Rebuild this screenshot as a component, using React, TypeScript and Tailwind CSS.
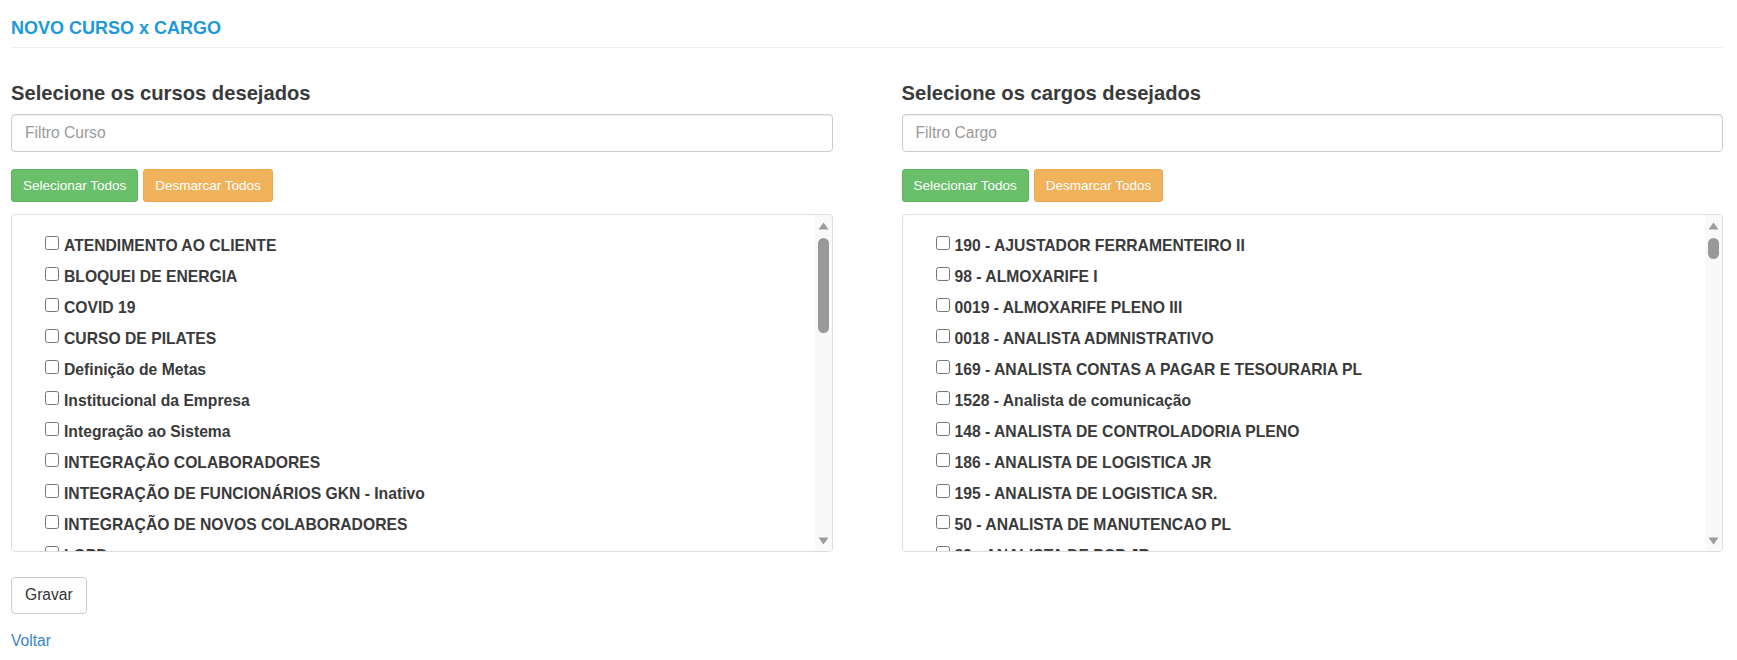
import React from 'react';

const cursos = [
  'ATENDIMENTO AO CLIENTE',
  'BLOQUEI DE ENERGIA',
  'COVID 19',
  'CURSO DE PILATES',
  'Definição de Metas',
  'Institucional da Empresa',
  'Integração ao Sistema',
  'INTEGRAÇÃO COLABORADORES',
  'INTEGRAÇÃO DE FUNCIONÁRIOS GKN - Inativo',
  'INTEGRAÇÃO DE NOVOS COLABORADORES',
  'LGPD',
  'NR 10',
  'NR 35',
];

const cargos = [
  '190 - AJUSTADOR FERRAMENTEIRO II',
  '98 - ALMOXARIFE I',
  '0019 - ALMOXARIFE PLENO III',
  '0018 - ANALISTA ADMNISTRATIVO',
  '169 - ANALISTA CONTAS A PAGAR E TESOURARIA PL',
  '1528 - Analista de comunicação',
  '148 - ANALISTA DE CONTROLADORIA PLENO',
  '186 - ANALISTA DE LOGISTICA JR',
  '195 - ANALISTA DE LOGISTICA SR.',
  '50 - ANALISTA DE MANUTENCAO PL',
  '89 - ANALISTA DE PCP JR',
  '77 - ANALISTA DE RH',
];

const Scrollbar: React.FC<{ thumb: number }> = ({ thumb }) => (
  <div className="w-[17px] shrink-0 bg-[#f9f9f9] flex flex-col items-center pt-[7px] pb-[6px]">
    <svg width="11" height="8" viewBox="0 0 11 8" className="shrink-0">
      <path d="M5.5 0.5 L10.5 7.5 L0.5 7.5 Z" fill="#9b9b9b" />
    </svg>
    <div className="w-[11px] rounded-full bg-[#999] mt-[8px] shrink-0" style={{ height: thumb }} />
    <div className="flex-1" />
    <svg width="11" height="8" viewBox="0 0 11 8" className="shrink-0">
      <path d="M0.5 0.5 L10.5 0.5 L5.5 7.5 Z" fill="#9b9b9b" />
    </svg>
  </div>
);

const Column: React.FC<{ title: string; placeholder: string; items: string[]; thumb: number }> = ({
  title,
  placeholder,
  items,
  thumb,
}) => (
  <div className="w-[822px] flex flex-col">
    <h4 className="mt-[34px] text-[20.2px] font-bold leading-[22px] text-[#3a3a3a]">{title}</h4>
    <input
      placeholder={placeholder}
      className="mt-[10px] h-[38px] w-full px-[13px] border border-[#ccc] rounded-[4px] text-[15.6px] text-[#555] placeholder:text-[#999] shadow-[inset_0_1px_1px_rgba(0,0,0,0.075)] outline-none"
    />
    <div className="mt-[17px] flex gap-[5px]">
      <button className="px-[11px] py-[5.5px] leading-[19.8px] text-[13.5px] text-white bg-[#6abf6b] border border-[#5db55e] rounded-[3px]">
        Selecionar Todos
      </button>
      <button className="px-[11px] py-[5.5px] leading-[19.8px] text-[13.5px] text-white bg-[#f0b35c] border border-[#eaa94c] rounded-[3px]">
        Desmarcar Todos
      </button>
    </div>
    <div className="mt-[12px] h-[338px] border border-[#ddd] rounded-[4px] flex overflow-hidden">
      <div className="flex-1 overflow-hidden pt-[15px] pl-[33px]">
        {items.map((it) => (
          <label key={it} className="flex items-start h-[31px]">
            <input type="checkbox" className="m-0 mt-[6px] h-[14px] w-[14px] shrink-0" />
            <span className="ml-[5px] leading-[31px] text-[15.7px] font-bold text-[#3a3a3a] whitespace-nowrap">{it}</span>
          </label>
        ))}
      </div>
      <Scrollbar thumb={thumb} />
    </div>
  </div>
);

export default function App() {
  return (
    <div
      className="w-[1737px] h-[660px] bg-white pl-[11px] pr-[14px] text-[#333]"
      style={{ fontFamily: '"Liberation Sans", Arial, sans-serif' }}
    >
      <div className="pt-[18px] pb-[9px] border-b border-[#eee] text-[18px] font-bold leading-[20px] text-[#1c99d9]">
        NOVO CURSO x CARGO
      </div>
      <div className="flex gap-[69px]">
        <Column title="Selecione os cursos desejados" placeholder="Filtro Curso" items={cursos} thumb={95} />
        <Column title="Selecione os cargos desejados" placeholder="Filtro Cargo" items={cargos} thumb={21} />
      </div>
      <button className="mt-[25px] h-[37px] px-[13px] border border-[#ccc] rounded-[4px] text-[15.6px] leading-[22px] text-[#333] bg-white">
        Gravar
      </button>
      <div className="mt-[15px]">
        <a href="#" className="text-[15.6px] leading-[22px] text-[#3a86c8]">
          Voltar
        </a>
      </div>
    </div>
  );
}
